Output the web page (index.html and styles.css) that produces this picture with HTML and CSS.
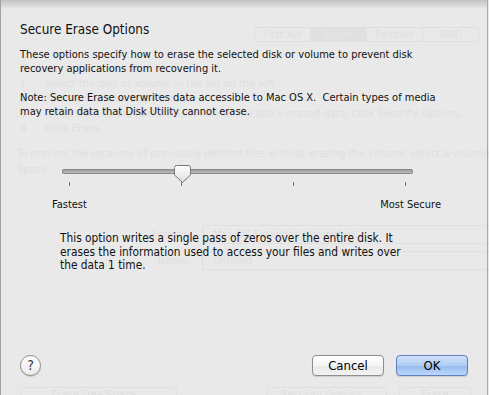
FILE: index.html
```html
<!DOCTYPE html>
<html lang="en">
<head>
    <meta charset="UTF-8">
    <title>Secure Erase Options</title>
    <link rel="stylesheet" href="styles.css">
</head>
<body>

    <!-- the Disk Utility window behind the sheet -->
    <div class="window">
        <div class="tabs">
            <span>First Aid</span>
            <span class="on">Erase</span>
            <span>Partition</span>
            <span>RAID</span>
        </div>
        <div class="steps">
            <div>To erase a disk or volume:</div>
            <div><b>1</b>Select the disk or volume in the list on the left.</div>
            <div><b>2</b>Specify a format and name.</div>
            <div><b>3</b>If you want to prevent the recovery of the disk's erased data, click Security Options.</div>
            <div><b>4</b>Click Erase.</div>
        </div>
        <p class="ghost-para">To prevent the recovery of previously deleted files without erasing the volume, select a volume and click Erase Free<br>Space.</p>
        <div class="form-row">
            <label>Format:</label>
            <div class="field">Mac OS Extended (Journaled)</div>
        </div>
        <div class="form-row second">
            <label>Name:</label>
            <div class="field">Untitled</div>
        </div>
        <div class="window-buttons">
            <span class="free">Erase Free Space...</span>
            <span class="security">Security Options...</span>
            <span class="erase">Erase</span>
        </div>
    </div>

    <!-- sheet -->
    <div class="sheet">
        <h1>Secure Erase Options</h1>
        <p class="intro">These options specify how to erase the selected disk or volume to prevent disk<br>recovery applications from recovering it.</p>
        <p class="intro note">Note: Secure Erase overwrites data accessible to Mac OS X.&nbsp; Certain types of media<br>may retain data that Disk Utility cannot erase.</p>

        <div class="slider">
            <div class="track">
                <svg class="thumb" width="17" height="18" viewBox="0 0 17 18">
                    <defs>
                        <linearGradient id="thumbFill" x1="0" y1="0" x2="0" y2="1">
                            <stop offset="0" stop-color="#ffffff"/>
                            <stop offset="1" stop-color="#dcdcdc"/>
                        </linearGradient>
                    </defs>
                    <path d="M2.5 0.5 H14.5 Q16.5 0.5 16.5 2.5 V10 L8.5 17.5 L0.5 10 V2.5 Q0.5 0.5 2.5 0.5 Z" fill="url(#thumbFill)" stroke="#777"/>
                </svg>
            </div>
            <div class="ticks"><i></i><i></i><i></i><i></i></div>
        </div>
        <div class="labels">
            <span>Fastest</span>
            <span>Most Secure</span>
        </div>

        <p class="desc">This option writes a single pass of zeros over the entire disk. It<br>erases the information used to access your files and writes over<br>the data 1 time.</p>

        <div class="footer">
            <button class="help">?</button>
            <div class="actions">
                <button class="btn">Cancel</button>
                <button class="btn ok">OK</button>
            </div>
        </div>
    </div>

</body>
</html>
```

FILE: styles.css
```css
body {
    margin: 0;
    width: 489px;
    height: 395px;
    overflow: hidden;
    position: relative;
    background-color: #e9e9e9;
    font-family: "DejaVu Sans Condensed", "DejaVu Sans", sans-serif;
    font-stretch: condensed;
}

/* window behind the sheet, seen faintly */
.window {
    height: 395px;
    overflow: hidden;
    color: #dfdfdf;
    font-size: 11px;
}

.tabs {
    display: flex;
    width: 223px;
    height: 13px;
    margin: 27px 0 0 254px;
    border: 1px solid #dfdfdf;
    border-radius: 3px;
}

.tabs span {
    flex: 1;
    text-align: center;
    line-height: 13px;
    font-size: 10.5px;
    border-right: 1px solid #e0e0e0;
}

.tabs span:last-child {
    border-right: none;
}

.tabs .on {
    background-color: #e0e0e0;
    color: #e6e6e6;
}

.steps {
    margin: 19px 0 0 20px;
    line-height: 15px;
    white-space: nowrap;
}

.steps b {
    display: inline-block;
    width: 25px;
    font-weight: normal;
}

.ghost-para {
    margin: 10px 0 0 17px;
    line-height: 16px;
    white-space: nowrap;
}

.form-row {
    display: flex;
    align-items: center;
    margin-top: 47px;
}

.form-row.second {
    margin-top: 7px;
}

.form-row label {
    width: 190px;
    text-align: right;
    margin-right: 12px;
}

.field {
    flex: 1;
    height: 17px;
    line-height: 17px;
    padding-left: 10px;
    border: 1px solid #e0e0e0;
    border-right: none;
}

.window-buttons {
    display: flex;
    margin-top: 117px;
    padding-left: 20px;
}

.window-buttons span {
    height: 14px;
    line-height: 14px;
    text-align: center;
    border: 1px solid #e0e0e0;
    border-bottom: none;
    border-radius: 4px 4px 0 0;
}

.window-buttons .free {
    width: 155px;
}

.window-buttons .security {
    width: 118px;
    margin-left: 90px;
}

.window-buttons .erase {
    width: 70px;
    margin-left: 12px;
}

/* the sheet itself */
.sheet {
    position: absolute;
    top: 0;
    left: 0;
    width: 488px;
    height: 395px;
    box-sizing: border-box;
    padding: 22px 19px 19px 19px;
    border-left: 1px solid #a4a4a4;
    border-right: 1px solid #a8a8a8;
    background: linear-gradient(rgba(0, 0, 0, 0.17), rgba(0, 0, 0, 0) 9px);
    display: flex;
    flex-direction: column;
    color: #111;
    font-size: 11px;
}

h1 {
    margin: 0;
    font-size: 13.4px;
    font-weight: normal;
    line-height: 16px;
}

.intro {
    margin: 10px 0 0;
    line-height: 14px;
    white-space: nowrap;
}

.intro.note {
    margin-top: 15px;
}

.slider {
    width: 351px;
    margin: 46px 0 0 42px;
}

.track {
    position: relative;
    height: 5px;
    margin-top: 4px;
    border-radius: 3px;
    background: linear-gradient(#8e8e8e, #b4b4b4 60%, #c6c6c6);
    box-shadow: inset 0 0 0 1px #8a8a8a;
}

.thumb {
    position: absolute;
    left: 112px;
    top: -4px;
}

.ticks {
    display: flex;
    justify-content: space-between;
    height: 4px;
    margin: 8px 7px 0;
}

.ticks i {
    width: 1px;
    height: 4px;
    background-color: #7c7c7c;
}

.labels {
    display: flex;
    justify-content: space-between;
    width: 389px;
    margin: 12px 0 0 32px;
    line-height: 14px;
}

.desc {
    margin: 20px 0 0 40px;
    font-size: 11.8px;
    line-height: 13.5px;
    white-space: nowrap;
}

.footer {
    margin-top: auto;
    display: flex;
    align-items: center;
}

.help {
    width: 21px;
    height: 21px;
    padding: 0;
    border: 1px solid #8c8c8c;
    border-radius: 50%;
    background: linear-gradient(#ffffff, #ececec);
    box-shadow: 0 1px 1px rgba(0, 0, 0, 0.15);
    font-family: inherit;
    font-size: 14px;
    line-height: 19px;
    color: #333;
}

.actions {
    display: flex;
    gap: 12px;
    margin-left: auto;
}

.btn {
    width: 72px;
    height: 21px;
    padding: 0;
    border: 1px solid #8e8e8e;
    border-radius: 4px;
    background: linear-gradient(#ffffff, #f4f4f4 50%, #e9e9e9 51%, #f3f3f3);
    box-shadow: 0 1px 1px rgba(0, 0, 0, 0.12);
    font-family: inherit;
    font-size: 13px;
    line-height: 19px;
    color: #000;
}

.btn.ok {
    border-color: #5f7fbe;
    background: linear-gradient(#cfe1fa, #b0ccf4 50%, #94baf0 51%, #bcd6fa);
}
```
